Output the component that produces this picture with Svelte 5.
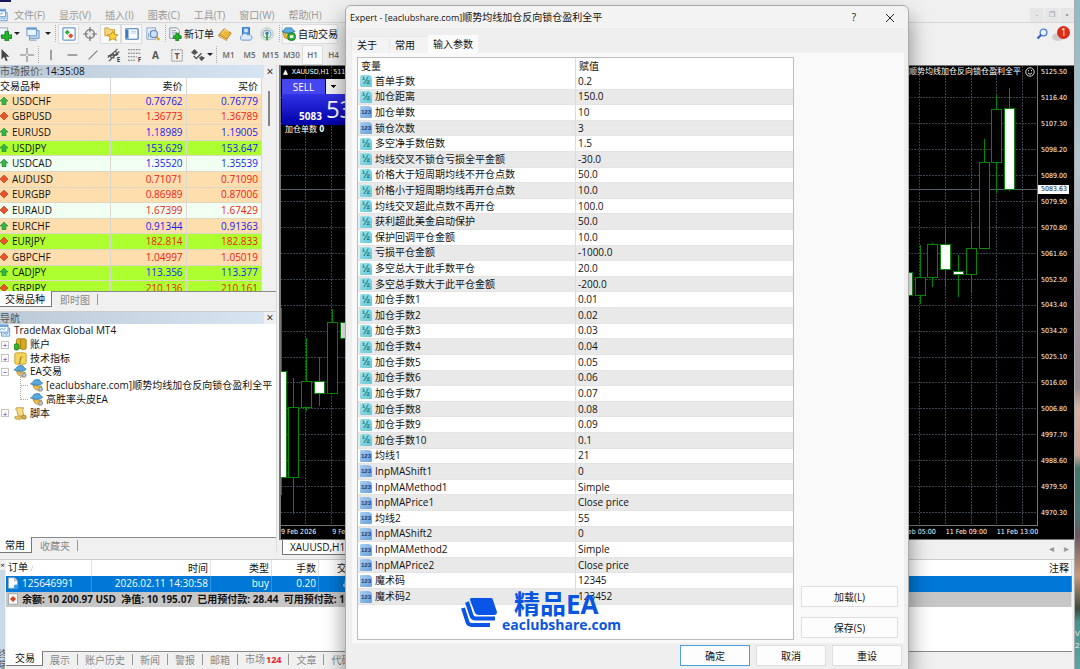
<script lang="ts">
	type Candle = { x: number; top: number; bottom: number; high: number; low: number; down?: boolean };

	const menus = ['文件(F)', '显示(V)', '插入(I)', '图表(C)', '工具(T)', '窗口(W)', '帮助(H)'];
	const periods = ['M1', 'M5', 'M15', 'M30', 'H1', 'H4'];

	const quotes = [
		{ symbol: 'USDCHF', bid: '0.76762', ask: '0.76779', up: true, tone: 'peach' },
		{ symbol: 'GBPUSD', bid: '1.36773', ask: '1.36789', up: false, tone: 'peach' },
		{ symbol: 'EURUSD', bid: '1.18989', ask: '1.19005', up: true, tone: 'peach' },
		{ symbol: 'USDJPY', bid: '153.629', ask: '153.647', up: true, tone: 'lime' },
		{ symbol: 'USDCAD', bid: '1.35520', ask: '1.35539', up: true, tone: 'mint' },
		{ symbol: 'AUDUSD', bid: '0.71071', ask: '0.71090', up: false, tone: 'peach' },
		{ symbol: 'EURGBP', bid: '0.86989', ask: '0.87006', up: false, tone: 'peach' },
		{ symbol: 'EURAUD', bid: '1.67399', ask: '1.67429', up: false, tone: 'mint' },
		{ symbol: 'EURCHF', bid: '0.91344', ask: '0.91363', up: true, tone: 'peach' },
		{ symbol: 'EURJPY', bid: '182.814', ask: '182.833', up: false, tone: 'lime' },
		{ symbol: 'GBPCHF', bid: '1.04997', ask: '1.05019', up: false, tone: 'peach' },
		{ symbol: 'CADJPY', bid: '113.356', ask: '113.377', up: true, tone: 'lime' },
		{ symbol: 'GBPJPY', bid: '210.136', ask: '210.161', up: false, tone: 'lime' },
	];

	const tree = [
		{ icon: 'app', label: 'TradeMax Global MT4', level: 0, toggle: '' },
		{ icon: 'accounts', label: '账户', level: 1, toggle: '+' },
		{ icon: 'indicator', label: '技术指标', level: 1, toggle: '+' },
		{ icon: 'expert', label: 'EA交易', level: 1, toggle: '-' },
		{ icon: 'expert', label: '[eaclubshare.com]顺势均线加仓反向锁仓盈利全平', level: 2, toggle: '' },
		{ icon: 'expert', label: '高胜率头皮EA', level: 2, toggle: '' },
		{ icon: 'script', label: '脚本', level: 1, toggle: '+' },
	];

	const params = [
		['real', '首单手数', '0.2'],
		['real', '加仓距离', '150.0'],
		['int', '加仓单数', '10'],
		['int', '锁仓次数', '3'],
		['real', '多空净手数倍数', '1.5'],
		['real', '均线交叉不锁仓亏损全平金额', '-30.0'],
		['real', '价格大于短周期均线不开仓点数', '50.0'],
		['real', '价格小于短周期均线再开仓点数', '10.0'],
		['real', '均线交叉超此点数不再开仓', '100.0'],
		['real', '获利超此美金启动保护', '50.0'],
		['real', '保护回调平仓金额', '10.0'],
		['real', '亏损平仓金额', '-1000.0'],
		['real', '多空总大于此手数平仓', '20.0'],
		['real', '多空总手数大于此平仓金额', '-200.0'],
		['real', '加仓手数1', '0.01'],
		['real', '加仓手数2', '0.02'],
		['real', '加仓手数3', '0.03'],
		['real', '加仓手数4', '0.04'],
		['real', '加仓手数5', '0.05'],
		['real', '加仓手数6', '0.06'],
		['real', '加仓手数7', '0.07'],
		['real', '加仓手数8', '0.08'],
		['real', '加仓手数9', '0.09'],
		['real', '加仓手数10', '0.1'],
		['int', '均线1', '21'],
		['int', 'InpMAShift1', '0'],
		['int', 'InpMAMethod1', 'Simple'],
		['int', 'InpMAPrice1', 'Close price'],
		['int', '均线2', '55'],
		['int', 'InpMAShift2', '0'],
		['int', 'InpMAMethod2', 'Simple'],
		['int', 'InpMAPrice2', 'Close price'],
		['int', '魔术码', '12345'],
		['int', '魔术码2', '123452'],
	];

	const prices = [
		'5125.50', '5116.40', '5107.30', '5098.20', '5089.00', '5079.90', '5070.80', '5061.60', '5052.50',
		'5043.40', '5034.20', '5025.10', '5016.00', '5006.80', '4997.70', '4988.60', '4979.50', '4970.30',
	];

	const times = [
		'9 Feb 2026', '9 Feb 05:00', '9 Feb 09:00', '9 Feb 13:00', '9 Feb 17:00', '9 Feb 21:00', '10 Feb 02:00',
		'10 Feb 06:00', '10 Feb 10:00', '10 Feb 14:00', '10 Feb 18:00', '11 Feb 01:00', '11 Feb 05:00',
		'11 Feb 09:00', '11 Feb 13:00',
	];

	const candles: Candle[] = [
		{ x: 281, top: 371, bottom: 477, high: 308, low: 495, down: true },
		{ x: 293, top: 407, bottom: 477, high: 378, low: 514 },
		{ x: 306, top: 381, bottom: 407, high: 338, low: 411 },
		{ x: 319, top: 381, bottom: 393, high: 357, low: 406, down: true },
		{ x: 332, top: 322, bottom: 393, high: 309, low: 394 },
		{ x: 345, top: 322, bottom: 338, high: 298, low: 388, down: true },
		{ x: 907, top: 272, bottom: 295, high: 260, low: 300, down: true },
		{ x: 920, top: 277, bottom: 295, high: 245, low: 304 },
		{ x: 932, top: 244, bottom: 277, high: 243, low: 287 },
		{ x: 945, top: 244, bottom: 269, high: 229, low: 287, down: true },
		{ x: 958, top: 271, bottom: 274, high: 255, low: 297, down: true },
		{ x: 971, top: 248, bottom: 274, high: 222, low: 293 },
		{ x: 984, top: 162, bottom: 248, high: 139, low: 249 },
		{ x: 996, top: 109, bottom: 162, high: 95, low: 193 },
		{ x: 1009, top: 108, bottom: 189, high: 88, low: 191, down: true },
	];

	const gridX = Array.from({ length: 29 }, (_, i) => Math.round(305 + i * 25.6));
	const gridY = Array.from({ length: 17 }, (_, i) => Math.round(97 + i * 25.95));

	const terminalTabs = ['交易', '展示', '账户历史', '新闻', '警报', '邮箱', '市场', '文章', '代码库'];

	let period = $state('H1');
	let terminalTab = $state('交易');
	let dialogTab = $state('输入参数');
</script>

{#snippet icon(name: string)}
	<svg class="icon" viewBox="0 0 16 16" aria-hidden="true">
		{#if name === 'newchart'}
			<path d="M1 1h10v9H1z" fill="#eef4fb" stroke="#8a9db3" />
			<path d="M8 5h4v4h4v4h-4v3H8v-3H4V9h4z" fill="#23b52c" stroke="#0d7d18" />
		{:else if name === 'profiles'}
			<path d="M4 4h11v9H4z" fill="#bcd6f2" stroke="#6792c1" />
			<path d="M1 1h11v9H1z" fill="#e9f3fd" stroke="#6792c1" />
			<path d="M1 2h11" stroke="#5d95d3" stroke-width="2" />
			<path d="M4 15h8M4 13v2" stroke="#6792c1" fill="none" />
		{:else if name === 'watch'}
			<rect x="1" y="1" width="14" height="14" rx="1" fill="#fff" stroke="#6a9bd0" stroke-width="1.4" />
			<path d="M6 3l3 3-3 3-3-3z" fill="#2db14a" />
			<path d="M10 7l3 3-3 3-3-3z" fill="#e44c2b" />
		{:else if name === 'target'}
			<circle cx="8" cy="8" r="5" fill="none" stroke="#777" stroke-width="1.6" />
			<path d="M8 0v6M8 10v6M0 8h6M10 8h6" stroke="#777" stroke-width="1.4" />
		{:else if name === 'navigator'}
			<path d="M1 1h4l1 2h6v7H1z" fill="#f5d77a" stroke="#c79a29" />
			<path d="M10 5l2 3.5 4 .5-3 2.5 1 4-4-2-4 2 1-4-3-2.5 4-.5z" fill="#ffd23a" stroke="#c08a12" />
		{:else if name === 'terminal'}
			<rect x="1" y="2" width="14" height="12" rx="1" fill="#f8fbff" stroke="#4078bd" stroke-width="1.4" />
			<path d="M1 3h3v10H1z" fill="#4078bd" />
			<path d="M7 5h6M7 7h6" stroke="#b7c9df" />
		{:else if name === 'tester'}
			<path d="M1 1h10v13H1z" fill="#e9f1fb" stroke="#7d9cc0" />
			<path d="M3 12V7M5 12V4M7 12V8" stroke="#7d9cc0" />
			<circle cx="9" cy="8" r="4" fill="#cfe4fb" stroke="#5a88bd" stroke-width="1.3" />
			<path d="M12 11l3 4" stroke="#d59b22" stroke-width="2.4" />
		{:else if name === 'order'}
			<path d="M2 1h8l3 3v9H2z" fill="#f7f9fb" stroke="#78889b" />
			<path d="M4 4h5M4 6h6M4 8h4" stroke="#8fa0b3" />
			<path d="M9 7h3v3h3v3h-3v3H9v-3H6v-3h3z" fill="#23b52c" stroke="#0d7d18" />
		{:else if name === 'editor'}
			<path d="M1 9l6-7 8 5-5 7z" fill="#eab738" stroke="#a87511" />
			<path d="M1 9l9 5v1.5L1 11z" fill="#fff1c2" stroke="#a87511" stroke-width=".7" />
			<path d="M4 8l4-5 4 2.5" fill="none" stroke="#f9dc86" stroke-width="1.2" />
		{:else if name === 'cloud'}
			<rect x="4" y="0" width="8" height="10" rx="1" fill="#4f9ade" stroke="#2b6bae" />
			<path d="M6 2h4v4H6z" fill="#d4e8fb" />
			<path d="M3 15a3 3 0 010-5 4 4 0 017-1 3 3 0 013 6z" fill="#dceafa" stroke="#5c8fc8" />
		{:else if name === 'signal'}
			<circle cx="8" cy="8" r="7" fill="none" stroke="#a9c2a9" />
			<circle cx="8" cy="8" r="4.5" fill="none" stroke="#7ba6c8" stroke-width="1.3" />
			<circle cx="8" cy="7" r="2" fill="#3d7ec0" />
			<path d="M8 8v7" stroke="#2fa33a" stroke-width="2" />
		{:else if name === 'auto'}
			<path d="M1 6l2 6 6 3 4-6z" fill="#e9b934" stroke="#a97c15" />
			<path d="M0 5q3-1 4-4h7q1 3 4 4-7 4-15 0z" fill="#5eaee0" stroke="#2f7bb0" />
			<circle cx="11" cy="11" r="4.5" fill="#27ae3c" stroke="#147a25" />
			<path d="M9 9.5h4v3H9z" fill="#fff" />
		{:else if name === 'cursor'}
			<path d="M4 1v12l3-3 2 5 2-1-2-4h4z" fill="#444" />
		{:else if name === 'cross'}
			<path d="M8 0v7M8 9v7M0 8h7M9 8h7" stroke="#777" stroke-width="1.2" />
		{:else if name === 'vline'}
			<path d="M8 2v12" stroke="#666" stroke-width="1.3" />
		{:else if name === 'hline'}
			<path d="M3 8h11" stroke="#666" stroke-width="1.3" />
		{:else if name === 'trend'}
			<path d="M3 13L13 3" stroke="#777" stroke-width="1.3" />
		{:else if name === 'channel'}
			<path d="M1 11L12 1M2 15L14 4M4 7l1 7M7 5l1 7M10 2l1 7M1 9l12-2" stroke="#555" stroke-width="1.3" />
			<text x="11" y="16" font-size="7" font-weight="bold" fill="#444">E</text>
		{:else if name === 'fibo'}
			<path d="M0 2h15M0 6h15M0 10h10M0 14h9" stroke="#666" stroke-dasharray="2 1" />
			<text x="11" y="16" font-size="7" font-weight="bold" fill="#444">F</text>
		{:else if name === 'textbox'}
			<rect x="2" y="2" width="12" height="13" fill="none" stroke="#777" stroke-dasharray="2 1" />
			<text x="5" y="12" font-size="10" font-weight="bold" fill="#555">T</text>
		{:else if name === 'arrows'}
			<path d="M0 5l4-4 4 4-4 3zM9 11l3 4 4-4-4-2z" fill="#555" />
			<path d="M3 9l3 3 6-6" fill="none" stroke="#555" stroke-width="1.5" />
		{:else if name === 'search'}
			<circle cx="10" cy="6" r="4.5" fill="#eef4ff" stroke="#4a7fdc" stroke-width="1.8" />
			<path d="M7 9l-5 5" stroke="#3563c0" stroke-width="3" />
		{:else if name === 'app'}
			<path d="M5 5h10v10H5z" fill="#dcecfb" stroke="#5493cf" />
			<path d="M1 1h12v9H1z" fill="#f5faff" stroke="#5493cf" />
			<path d="M1 2.5h12" stroke="#5493cf" stroke-width="2" />
			<path d="M3 8l2-3 2 2 3-2M7 13l2-2 2 2 2-2" fill="none" stroke="#5493cf" />
		{:else if name === 'accounts'}
			<rect x="3" y="1" width="7" height="12" rx="2" fill="#e2b324" stroke="#98730c" />
			<rect x="8" y="1" width="7" height="13" rx="2" fill="#d9aa20" stroke="#98730c" />
			<rect x="0" y="7" width="6" height="8" rx="3" fill="#36b52e" stroke="#1c7d1a" />
		{:else if name === 'indicator'}
			<rect x="1" y="1" width="14" height="14" rx="2" fill="#f6d457" stroke="#bb922c" />
			<text x="6" y="12" font-size="11" font-style="italic" font-family="Liberation Serif" fill="#76530c">f</text>
		{:else if name === 'expert'}
			<path d="M3 8l2 4 6 3 3-6z" fill="#eec04a" stroke="#b88a20" />
			<path d="M0 6q3-1 4-4 3-2 7-1 1 3 4 4-4 5-15 1z" fill="#58a8dc" stroke="#2f79b0" />
			<circle cx="12.5" cy="12.5" r="2.5" fill="#b9c0c7" stroke="#7f8890" />
		{:else if name === 'script'}
			<path d="M3 1h9q-2 2-1 5l1 5H5L4 6Q4 3 2 3z" fill="#f8dd82" stroke="#b88f2d" />
			<path d="M1 12h9q0 3-2 3H3q-2 0-2-3z" fill="#f2cb5d" stroke="#b88f2d" />
			<circle cx="12.5" cy="12.5" r="2.5" fill="#d8b24b" stroke="#a07a1d" />
		{:else if name === 'deal'}
			<path d="M2 1h8l4 4v10H2z" fill="#fff" stroke="#98a5b1" />
			<path d="M10 1v4h4" fill="#d6dce2" stroke="#98a5b1" />
			<circle cx="12" cy="13" r="3" fill="#2f9be8" />
		{:else if name === 'balance'}
			<path d="M2 1h12v14H2z" fill="#f7f7f7" stroke="#999" />
			<path d="M8 4l4 4-4 4-4-4z" fill="#d6421c" />
		{/if}
	</svg>
{/snippet}

{#snippet tick(up: boolean)}
	<svg class="tick" viewBox="0 0 8 8" aria-hidden="true">
		{#if up}
			<path d="M4 0l4 4H6v4H2V4H0z" fill="#35b548" stroke="#1b8a2d" stroke-width=".6" />
		{:else}
			<path d="M4 0l4 4-4 4-4-4z" fill="#e8532b" stroke="#b8330f" stroke-width=".6" />
		{/if}
	</svg>
{/snippet}

{#snippet tool(name: string, label: string, pressed = false)}
	<button class="tool" class:pressed aria-label={label}>{@render icon(name)}</button>
{/snippet}

<div class="desktop">
	<div class="app">
		<div class="caption"><span></span></div>
		<nav class="menubar">
			{@render icon('app')}
			{#each menus as menu}
				<button>{menu}</button>
			{/each}
			<div class="mdi">
				<button aria-label="最小化">-</button>
				<button aria-label="还原">❐</button>
				<button aria-label="关闭子窗口">▪</button>
			</div>
		</nav>

		<div class="toolbar">
			<button class="tool first" aria-label="新图表">{@render icon('newchart')}</button>
			<button class="caret" aria-label="新图表列表"></button>
			{@render tool('profiles', '配置文件')}
			<button class="caret" aria-label="配置文件列表"></button>
			<i class="sep"></i>
			{@render tool('watch', '市场报价', true)}
			{@render tool('target', '数据窗口')}
			{@render tool('navigator', '导航', true)}
			{@render tool('terminal', '终端', true)}
			{@render tool('tester', '策略测试')}
			<i class="sep"></i>
			<button class="tool wide">{@render icon('order')}新订单</button>
			{@render tool('editor', '编辑器')}
			{@render tool('cloud', '云端')}
			{@render tool('signal', '信号')}
			<i class="sep"></i>
			<button class="tool wide pressed">{@render icon('auto')}自动交易</button>
			<div class="tray">
				<button class="tool" aria-label="搜索">{@render icon('search')}</button>
				<button class="alerts" aria-label="消息"><span>1</span></button>
			</div>
		</div>

		<div class="toolbar lower">
			<button class="tool first" aria-label="光标">{@render icon('cursor')}</button>
			<i class="space"></i>
			{@render tool('cross', '十字准线')}
			<i class="sep"></i>
			{@render tool('vline', '垂直线')}
			{@render tool('hline', '水平线')}
			{@render tool('trend', '趋势线')}
			{@render tool('channel', '通道')}
			{@render tool('fibo', '斐波那契')}
			<button class="tool letter">A</button>
			{@render tool('textbox', '文字标签')}
			{@render tool('arrows', '箭头')}
			<button class="caret" aria-label="箭头列表"></button>
			<i class="sep"></i>
			{#each periods as p}
				<button class="tool period" class:pressed={p === period} onclick={() => (period = p)}>{p}</button>
			{/each}
		</div>

		<div class="workspace">
			<aside class="dock">
				<header class="dock-title"><span>市场报价: <b>14:35:08</b></span><button aria-label="关闭市场报价">×</button></header>
				<div class="watch">
					<table>
						<thead>
							<tr><th>交易品种</th><th>卖价</th><th>买价</th></tr>
						</thead>
						<tbody>
							{#each quotes as q}
								<tr class={q.tone} class:up={q.up}>
									<td>{@render tick(q.up)}{q.symbol}</td>
									<td>{q.bid}</td>
									<td>{q.ask}</td>
								</tr>
							{/each}
						</tbody>
					</table>
					<div class="scroll"><span></span></div>
				</div>
				<div class="tabs">
					<button class="active">交易品种</button>
					<button>即时图</button>
				</div>

				<header class="dock-title nav-title"><span>导航</span><button aria-label="关闭导航">×</button></header>
				<div class="nav-body">
					<ul>
						{#each tree as node}
							<li class="level{node.level}">
								{#if node.toggle}
									<button class="toggle" aria-label="展开或折叠">{node.toggle === '+' ? '+' : '−'}</button>
								{/if}
								{@render icon(node.icon)}
								<span>{node.label}</span>
							</li>
						{/each}
					</ul>
				</div>
				<div class="tabs">
					<button class="active">常用</button>
					<button>收藏夹</button>
				</div>
			</aside>

			<main>
				<section class="chart">
					<div class="plot">
						<svg viewBox="281 66 756 460" preserveAspectRatio="xMaxYMin slice" aria-label="XAUUSD,H1">
							{#each gridX as x}
								<path class="grid" d="M{x}.5 66V526" />
							{/each}
							{#each gridY as y}
								<path class="grid" d="M281 {y}.5H1037" />
							{/each}
							<path d="M281 189.5H1037" stroke="#56606c" />
							{#each candles as c}
								<path d="M{c.x}.5 {c.high}V{c.top}M{c.x}.5 {c.bottom}V{c.low}" stroke="#008a00" />
								<rect
									x={c.x - 4.5}
									y={c.top + 0.5}
									width="10"
									height={c.bottom - c.top}
									fill={c.down ? '#fff' : '#000'}
									stroke="#008a00"
								/>
							{/each}
						</svg>
						<div class="chart-head">
							<span>▲ &nbsp;XAUUSD,H1 &nbsp;5112.06</span>
							<span class="ea">[eaclubshare.com]顺势均线加仓反向锁仓盈利全平
								<svg viewBox="0 0 10 10" aria-hidden="true">
									<circle cx="5" cy="5" r="4.2" />
									<path d="M3 6q2 2.5 4 0M3.5 3v1.2M6.5 3v1.2" />
								</svg>
							</span>
						</div>
						<div class="one-click">
							<div class="trade">
								<button>SELL</button>
								<select aria-label="手数"><option></option></select>
							</div>
							<div class="quote"><b>5083</b><span>53</span></div>
							<p>加仓单数 <b>0</b></p>
						</div>
					</div>
					<div class="axis">
						{#each prices as price}
							<span>{price}</span>
						{/each}
						<strong>5083.63</strong>
					</div>
					<div class="times">
						{#each times as time}
							<span>{time}</span>
						{/each}
					</div>
				</section>
				<div class="chart-tabs">
					<button>XAUUSD,H1</button>
					<span>◂</span><span>▸</span>
				</div>
			</main>
		</div>

		<section class="terminal">
			<div class="gutter"><button aria-label="关闭终端">×</button><span>终端</span></div>
			<div class="terminal-body">
				<table>
					<thead>
						<tr><th>订单 <small>∕</small></th><th>时间</th><th>类型</th><th>手数</th><th>交易品种</th><th>注释</th></tr>
					</thead>
					<tbody>
						<tr class="selected">
							<td>{@render icon('deal')}125646991</td>
							<td>2026.02.11 14:30:58</td>
							<td>buy</td>
							<td>0.20</td>
							<td>audcad</td>
							<td></td>
						</tr>
						<tr class="summary">
							<td colspan="6">{@render icon('balance')}余额: 10 200.97 USD&nbsp; 净值: 10 195.07&nbsp; 已用预付款: 28.44&nbsp; 可用预付款: 10 166.63</td>
						</tr>
					</tbody>
				</table>
				<div class="tabs">
					{#each terminalTabs as tab}
						<button class:active={tab === terminalTab} onclick={() => (terminalTab = tab)}>
							{tab}{#if tab === '市场'}<em>124</em>{/if}
						</button>
					{/each}
				</div>
			</div>
		</section>
	</div>
	<div class="wallpaper"><span>V</span><span>2</span></div>

	<div class="dialog" role="dialog" aria-label="Expert">
		<header>
			<h1>Expert - [eaclubshare.com]<span>顺势均线加仓反向锁仓盈利全平</span></h1>
			<button aria-label="帮助">?</button>
			<button aria-label="关闭">
				<svg viewBox="0 0 10 10"><path d="M1 1l8 8M9 1l-8 8" stroke="#222" /></svg>
			</button>
		</header>
		<div class="dialog-tabs" role="tablist">
			{#each ['关于', '常用', '输入参数'] as tab}
				<button role="tab" aria-selected={tab === dialogTab} onclick={() => (dialogTab = tab)}>{tab}</button>
			{/each}
		</div>
		<div class="sheet">
			<div class="params">
				<table>
					<thead>
						<tr><th>变量</th><th>赋值</th></tr>
					</thead>
					<tbody>
						{#each params as [kind, name, value]}
							<tr>
								<td>
									<div class="param">
										<span class="kind {kind}">{kind === 'int' ? '123' : '½'}</span>
										{name}
									</div>
								</td>
								<td>{value}</td>
							</tr>
						{/each}
					</tbody>
				</table>
			</div>
			<div class="side">
				<button>加载(L)</button>
				<button>保存(S)</button>
			</div>
		</div>
		<footer>
			<button class="default">确定</button>
			<button>取消</button>
			<button>重设</button>
		</footer>
		<div class="brand">
			<svg viewBox="0 0 36 32" aria-hidden="true">
				<path d="M10 1h20q2 0 2 2l4 12q0 3-3 3H18q-3 0-4-2L9 3q0-2 1-2z" />
				<path class="layer" d="M6 5l4.5 13.5q1 3 4 3H34" />
				<path class="layer" d="M2 11l4.5 14q1 3 4 3H29" />
			</svg>
			<div><strong>精品EA</strong><span>eaclubshare.com</span></div>
		</div>
	</div>
</div>

<style>
	:global(body) {
		margin: 0;
		background: #f0f0f0;
	}

	.desktop {
		position: relative;
		display: flex;
		min-height: 100vh;
		overflow: hidden;
		font-family: 'Open Sans', 'Noto Sans CJK SC', sans-serif;
		font-size: 10px;
		line-height: 14px;
		color: #111;
	}

	.desktop :is(button, select) {
		margin: 0;
		padding: 0;
		border: 0;
		background: none;
		font: inherit;
		color: inherit;
		white-space: nowrap;
	}

	table {
		border-collapse: collapse;
		table-layout: fixed;
		width: 100%;
	}

	thead tr {
		height: 16px;
	}

	th,
	td {
		padding: 0;
		font-weight: 400;
		line-height: 13px;
		white-space: nowrap;
		overflow: hidden;
	}

	.icon {
		width: 14px;
		height: 14px;
		flex: none;
	}

	.app {
		flex: 1;
		min-width: 0;
		display: flex;
		flex-direction: column;
		background: #f0f0f0;
		border-right: 1px solid #a9adb0;
	}

	.caption {
		height: 7px;
	}

	.caption span {
		display: block;
		width: 11px;
		height: 2px;
		background: #15195c;
	}

	.menubar {
		display: flex;
		align-items: center;
		gap: 14px;
		height: 15px;
		border-bottom: 1px solid #d6d6d6;
		color: #999;
	}

	.menubar > .icon {
		width: 13px;
		margin: 0 -8px 0 -5px;
	}

	.mdi {
		display: flex;
		margin-left: auto;
		gap: 1px;
	}

	.mdi button {
		width: 14px;
		height: 14px;
		background: #e6e6e6;
		font-size: 7px;
		color: #8796a5;
	}

	.toolbar {
		display: flex;
		align-items: center;
		height: 21px;
	}

	.tool {
		display: flex;
		align-items: center;
		justify-content: center;
		flex: none;
		width: 21px;
		height: 20px;
	}

	.desktop .tool.pressed {
		background: #f9f9f9;
		box-shadow: inset 0 0 0 1px #dcdcdc;
	}

	.tool.first {
		width: 12px;
		justify-content: flex-end;
	}

	.tool.wide {
		width: auto;
		gap: 2px;
	}

	.desktop .letter {
		font-weight: 700;
		color: #555;
	}

	.desktop .period {
		font-size: 8px;
		font-weight: 600;
		color: #666;
	}

	.caret {
		width: 10px;
		height: 20px;
	}

	.caret::before {
		content: '';
		display: block;
		width: 0;
		margin: auto;
		border: 3px solid transparent;
		border-top-color: #222;
		border-bottom: 0;
	}

	.desktop .lower .caret {
		margin-left: -3px;
	}

	.sep {
		height: 17px;
		margin: 0 2px;
		border-left: 1px dotted #aaa;
	}

	.lower .sep {
		margin: 0 1px;
	}

	.space {
		width: 4px;
	}

	.tray {
		display: flex;
		align-items: center;
		margin-left: auto;
		padding-right: 4px;
	}

	.tray .icon {
		width: 12px;
	}

	.alerts {
		position: relative;
		width: 18px;
		height: 16px;
	}

	.alerts::before {
		content: '';
		position: absolute;
		left: 0;
		bottom: 1px;
		width: 12px;
		height: 8px;
		border-radius: 50%;
		background: #cfcfcf;
	}

	.alerts span {
		position: absolute;
		right: 0;
		top: 0;
		width: 13px;
		height: 13px;
		border-radius: 50%;
		background: #dd2a1a;
		color: #fff;
		line-height: 13px;
	}

	.workspace {
		display: flex;
		height: 490px;
	}

	.dock {
		display: flex;
		flex-direction: column;
		width: 276px;
		flex: none;
		margin-bottom: 2px;
		border-right: 1px solid #ddd;
	}

	.dock-title {
		display: flex;
		align-items: center;
		height: 13px;
		line-height: 13px;
		color: #555;
	}

	.dock-title b {
		font-weight: 400;
		color: #111;
	}

	.dock-title span {
		flex: 1;
		background: linear-gradient(90deg, #bccad8, #d7e5f2);
	}

	.desktop .dock-title button {
		width: 12px;
		font-size: 12px;
		line-height: 12px;
		color: #111;
	}

	.nav-title {
		height: 12px;
		margin-top: 4px;
		border-top: 1px solid #ccc;
		line-height: 12px;
	}

	.watch {
		display: flex;
		height: 213px;
		overflow: hidden;
		background: #f0f0f0;
	}

	.watch table {
		flex: 1;
		height: 219px;
		background: #fff;
	}

	.watch th,
	.watch td {
		padding-right: 3px;
		text-align: right;
		border-right: 1px solid #d8d8d0;
	}

	.watch td {
		border-bottom: 1px solid #dfd6c4;
		color: #f01818;
	}

	.watch .up td {
		color: #1a1af0;
	}

	.watch th:first-child,
	.watch tr td:first-child {
		width: 41%;
		text-align: left;
		color: #111;
	}

	.tick {
		width: 8px;
		height: 8px;
		margin-right: 4px;
	}

	.peach {
		background: #ffdead;
	}

	.lime {
		background: #adff2f;
	}

	.mint {
		background: #f0fff2;
	}

	.scroll {
		width: 14px;
	}

	.scroll span {
		display: block;
		width: 2px;
		height: 35px;
		margin: 13px 0 0 6px;
		background: #858585;
	}

	.tabs {
		display: flex;
		height: 15px;
		border-top: 1px solid #8a8a8a;
		color: #888;
	}

	.tabs button {
		position: relative;
		padding: 0 8px;
		line-height: 14px;
	}

	.tabs button:not(.active)::after {
		content: '';
		position: absolute;
		right: 0;
		top: 2px;
		height: 11px;
		border-right: 1px solid #999;
	}

	.desktop .tabs .active {
		margin-top: -1px;
		padding: 0 6px 0 5px;
		background: #fff;
		border: 1px solid #777;
		border-width: 0 1px 1px 0;
		color: #111;
	}

	.nav-body {
		flex: 1;
		background: #fff;
	}

	.nav-body ul {
		display: grid;
		grid-template-rows: repeat(7, 1fr);
		height: 96px;
		margin: 0;
		padding: 0;
		list-style: none;
		line-height: 13px;
	}

	.nav-body li {
		display: flex;
		align-items: center;
		gap: 3px;
		white-space: nowrap;
	}

	.nav-body .icon {
		height: 13px;
	}

	.nav-body .level0 .icon {
		margin-left: -3px;
	}

	.nav-body .level1 .icon {
		width: 13px;
		margin-left: 2px;
	}

	.nav-body .level2 {
		gap: 2px;
	}

	.nav-body .level2::before {
		content: '';
		width: 7px;
		height: 12px;
		margin: -12px 0 0 20px;
		border: 1px dotted #aaa;
		border-width: 0 0 1px 1px;
	}

	.desktop .toggle {
		width: 8px;
		height: 8px;
		margin-left: 1px;
		background: #fff;
		outline: 1px solid #c4c4c4;
		outline-offset: -1px;
		color: #33c;
		font-size: 8px;
		line-height: 7px;
	}

	main {
		flex: 1;
		min-width: 0;
		display: flex;
		flex-direction: column;
		margin-left: 2px;
	}

	.chart {
		flex: 1;
		min-height: 0;
		display: grid;
		grid-template-columns: 1fr 36px;
		grid-template-rows: 1fr 13px;
		border: 1px solid #777;
		border-width: 1px 0 1px 2px;
		background: #000;
		color: #fff;
		font-family: 'DejaVu Sans Condensed', 'Open Sans', 'Noto Sans CJK SC', sans-serif;
		font-size: 7px;
		line-height: 10px;
	}

	.plot {
		position: relative;
		min-width: 0;
		min-height: 0;
		overflow: hidden;
		border: 1px solid #777;
		border-width: 0 1px 1px 0;
	}

	.plot > svg {
		position: absolute;
		width: 100%;
		height: 100%;
	}

	.grid {
		stroke: #39434e;
		stroke-dasharray: 2 1;
	}

	.chart-head {
		position: relative;
		display: flex;
		justify-content: space-between;
		padding: 1px 2px 0;
	}

	.chart-head .ea {
		display: flex;
		align-items: center;
		gap: 4px;
		font-size: 8px;
	}

	.ea svg {
		width: 10px;
		height: 10px;
		fill: none;
		stroke: #ddd;
	}

	.one-click {
		position: relative;
		width: 110px;
		margin: 2px 0 0 1px;
	}

	.trade {
		display: flex;
		height: 15px;
	}

	.desktop .trade button {
		width: 43px;
		margin-right: 1px;
		background: #4646f0;
		font-family: 'Open Sans', sans-serif;
		font-size: 10px;
	}

	.desktop .trade select {
		flex: 1;
		appearance: none;
		background: linear-gradient(#111, #111) 5px 6px / 5px 1px no-repeat,
			linear-gradient(#111, #111) 6px 7px / 3px 1px no-repeat,
			linear-gradient(#111, #111) 7px 8px / 1px 1px no-repeat, #f2f2f2;
	}

	.quote {
		display: flex;
		align-items: flex-end;
		gap: 4px;
		height: 31px;
		padding-left: 17px;
		background: linear-gradient(#3232e6, #0000a8);
		color: #fff;
		font: 10px/18px 'Open Sans', sans-serif;
	}

	.quote span {
		font-size: 24px;
		line-height: 32px;
	}

	.one-click p {
		margin: 0 0 0 3px;
		line-height: 9px;
		font-size: 8px;
	}

	.axis {
		position: relative;
		display: flex;
		flex-direction: column;
		justify-content: space-between;
		padding: 1px 0 8px 3px;
	}

	.axis strong {
		position: absolute;
		left: 0;
		top: 119px;
		padding: 0 2px 0 3px;
		background: #fff;
		color: #111;
		font-weight: 400;
		line-height: 9px;
	}

	.times {
		grid-column: 1 / -1;
		display: grid;
		grid-template-columns: repeat(15, 1fr);
		padding-right: 26px;
		white-space: nowrap;
		line-height: 12px;
	}

	.chart-tabs {
		display: flex;
		align-items: center;
		gap: 10px;
		height: 15px;
		padding-right: 5px;
		color: #999;
	}

	.desktop .chart-tabs button {
		height: 15px;
		margin: 0 auto 0 3px;
		padding: 0 7px;
		border: 1px solid #777;
		border-top: 0;
		background: #fff;
		color: #111;
	}

	.terminal {
		flex: 1;
		display: flex;
		margin-top: 4px;
		border-top: 1px solid #ccc;
	}

	.gutter {
		width: 5px;
		margin-right: 1px;
		display: flex;
		flex-direction: column;
		justify-content: space-between;
		overflow: hidden;
		background: linear-gradient(#f0f0f0 10px, #c9d9e8 10px);
	}

	.desktop .gutter button {
		height: 10px;
		font-size: 8px;
		line-height: 8px;
	}

	.gutter span {
		writing-mode: vertical-rl;
		line-height: 6px;
		color: #555;
	}

	.terminal-body {
		flex: 1;
		min-width: 0;
		display: flex;
		flex-direction: column;
		margin-right: 2px;
		background: #fff;
	}

	.terminal table {
		height: 47px;
	}

	.terminal th,
	.terminal td {
		padding-right: 2px;
		text-align: right;
		border-right: 1px solid #e2e2e2;
	}

	.terminal .icon {
		width: 12px;
		height: 12px;
		margin: 0 3px 0 1px;
		vertical-align: -2px;
	}

	.terminal th:nth-child(1) {
		width: 81px;
		text-align: left;
		padding-left: 2px;
	}

	.terminal th:nth-child(2) {
		width: 116px;
	}

	.terminal th:nth-child(3) {
		width: 58px;
	}

	.terminal th:nth-child(4) {
		width: 44px;
	}

	.terminal th:nth-child(5) {
		width: 58px;
	}

	.terminal small {
		font-size: 7px;
		color: #aaa;
	}

	.terminal td:first-child {
		text-align: left;
	}

	.selected {
		background: #0078d7;
		color: #fff;
	}

	.terminal .selected td {
		border-color: #2f93e4;
	}

	.terminal .summary td {
		background: #c6c6c6;
		font-weight: 700;
	}

	.terminal .tabs {
		height: 17px;
		margin-top: auto;
		background: #f0f0f0;
	}

	.desktop .terminal .tabs button {
		height: 15px;
		padding: 0 8px 0 7px;
	}

	.desktop .terminal .tabs .active {
		padding: 0 7px 0 9px;
	}

	.terminal em {
		margin-left: 1px;
		font-size: 9px;
		font-style: normal;
		font-weight: 700;
		color: #e8212b;
	}

	.wallpaper {
		width: 5px;
		display: flex;
		flex-direction: column;
		justify-content: flex-end;
		padding-bottom: 18px;
		overflow: hidden;
		color: #e8f1f1;
		font-size: 8px;
		line-height: 12px;
		background: linear-gradient(
			#8fb9c4,
			#b5c5cf 25%,
			#a99fa9 42%,
			#9c8c92 58%,
			#d7b4a4 61%,
			#cfa894 68%,
			#47766d 70%,
			#4e7475 77%,
			#6b5660 80%,
			#c79b7e 86%,
			#3b4a38 91%,
			#4a9291 93%,
			#5aa5a3
		);
	}

	.dialog {
		position: absolute;
		right: 171px;
		top: 5px;
		bottom: -6px;
		width: 564px;
		display: flex;
		flex-direction: column;
		box-sizing: border-box;
		border: 1px solid #aaa;
		border-radius: 6px;
		background: #efefef;
		box-shadow: 0 12px 22px rgba(0, 0, 0, 0.45);
	}

	.dialog header {
		display: flex;
		align-items: center;
		height: 22px;
		padding-left: 4px;
		border-radius: 6px 6px 0 0;
		background: #f3f3f3;
	}

	h1 {
		flex: 1;
		margin: 0;
		font-size: 9px;
		font-weight: 400;
	}

	h1 span {
		font-size: 10px;
	}

	.dialog header button {
		width: 36px;
	}

	.dialog header svg {
		width: 10px;
		height: 10px;
		vertical-align: middle;
	}

	.dialog-tabs {
		display: flex;
		align-items: flex-end;
		height: 25px;
		padding-left: 6px;
	}

	.desktop .dialog-tabs button {
		height: 16px;
		min-width: 38px;
		padding: 0 5px;
		background: #f3f3f3;
		outline: 1px solid #e8e8e8;
		text-align: left;
	}

	.desktop .dialog-tabs [aria-selected='true'] {
		height: 18px;
		background: #fbfbfb;
		outline: 0;
	}

	.sheet {
		display: flex;
		height: 583px;
		margin: 0 4px 0 6px;
		padding: 4px 6px 3px 5px;
		background: #f9f9f9;
	}

	.params {
		width: 435px;
		border: 1px solid #bdbdbd;
		background: #fff;
	}

	.params table {
		height: 547px;
	}

	.params th {
		padding-left: 3px;
		text-align: left;
	}

	.params td {
		padding-left: 2px;
		border-bottom: 1px solid #e4e4e4;
	}

	.params :is(th, td):first-child {
		width: 50%;
		box-sizing: border-box;
		border-right: 1px solid #dcdcdc;
	}

	.params tbody tr:nth-child(even) {
		background: #e9e9e9;
	}

	.param {
		display: flex;
		align-items: center;
		gap: 3px;
	}

	.kind {
		width: 12px;
		height: 12px;
		border-radius: 1px 4px 1px 1px;
		text-align: center;
		font-family: 'Liberation Sans', sans-serif;
		font-weight: 700;
		line-height: 12px;
	}

	.real {
		background: linear-gradient(135deg, #a5e6ec, #62c6d4);
		color: #12727f;
		font-size: 10px;
	}

	.int {
		background: linear-gradient(135deg, #a9cff2, #679fd9);
		color: #123f77;
		font-size: 6px;
	}

	.side {
		flex: 1;
		display: flex;
		flex-direction: column;
		justify-content: flex-end;
		gap: 10px;
		padding: 0 0 2px 7px;
	}

	.desktop :is(.side, footer) button {
		height: 21px;
		border: 1px solid #dedede;
		background: #fdfdfd;
	}

	footer {
		display: flex;
		justify-content: flex-end;
		gap: 6px;
		padding: 2px 6px 0 0;
	}

	footer button {
		width: 70px;
	}

	.desktop footer .default {
		border-color: #4d9fdc;
	}

	.brand {
		position: absolute;
		left: 115px;
		top: 584px;
		display: flex;
		align-items: center;
		gap: 5px;
		color: #0a55e0;
		pointer-events: none;
	}

	.brand svg {
		width: 36px;
		height: 32px;
		margin-top: 4px;
		fill: #0a55e6;
	}

	.brand .layer {
		fill: none;
		stroke: #0a55e6;
		stroke-width: 4;
	}

	.brand div {
		display: flex;
		flex-direction: column;
	}

	.brand strong {
		padding-left: 12px;
		font-size: 26px;
		line-height: 28px;
	}

	.brand span {
		font-size: 14px;
		font-weight: 700;
		line-height: 14px;
	}
</style>
